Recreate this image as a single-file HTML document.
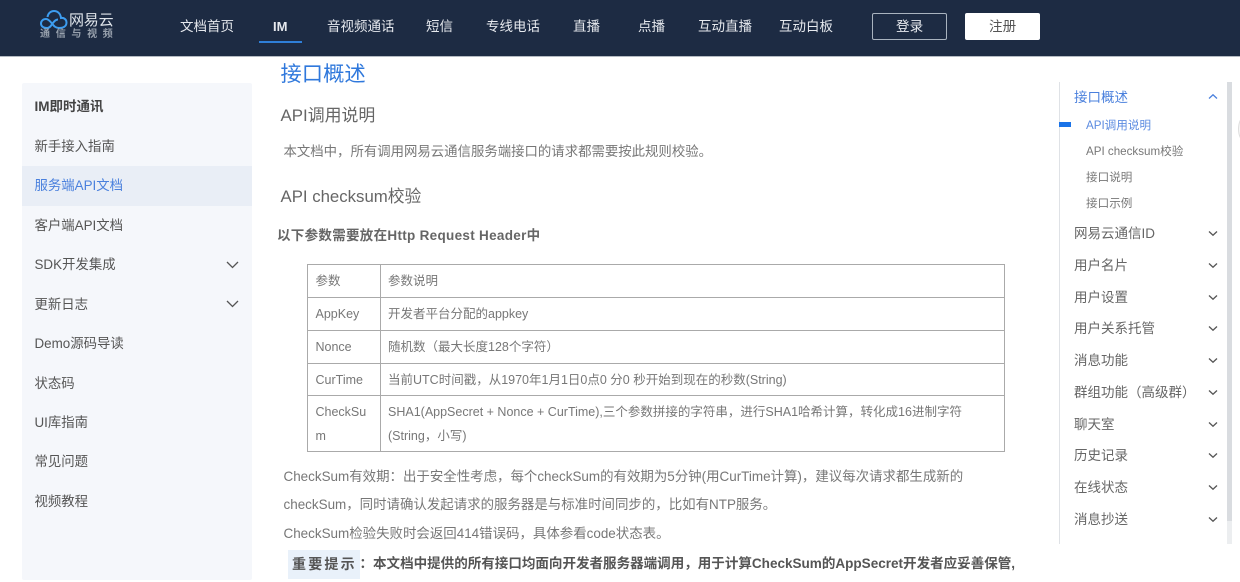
<!DOCTYPE html>
<html lang="zh-CN">
<head>
<meta charset="utf-8">
<title>接口概述</title>
<style>
html,body{margin:0;padding:0;width:1240px;height:582px;overflow:hidden;background:#fff}
body{position:relative;font-family:"Liberation Sans","Noto Sans CJK SC",sans-serif;color:#666}
#w{position:absolute;left:0;top:0;width:1240px;height:582px;filter:blur(.3px)}
.t{position:absolute;white-space:nowrap;line-height:20px;margin:0;font-weight:400}
.b{position:absolute}
.n{color:#e6e9ee;font-size:13.5px;top:17px}
.s{color:#555;font-size:13.4px;left:34.5px}
.r{color:#666;font-size:13.5px;left:1074px}
.u{color:#777;font-size:11.6px;left:1086px}
.c{color:#777;font-size:12.5px}
.p{color:#777;font-size:13.45px}
.h{background:#aaa}
svg{position:absolute;overflow:visible}
</style>
</head>
<body>
<div id="w">
<div class="b" style="left:0;top:0;width:1240px;height:56px;background:#1d2b43;border-bottom:1px solid #b4bac2"></div>

<svg style="left:40px;top:10px" width="28" height="20" viewBox="0 0 28 20" fill="none" stroke="#3d9df0" stroke-width="2">
<path d="M7 18C3 18 1 16 1 13.500C1 11 3 9 6 9C8 9 10 11 12 13.500C14 16 15.500 18 19 18C23 18 26.500 16.500 26.500 12.500C26.500 9.500 24 7.500 21 8C20.500 3.500 17.500 1 14 1C10.500 1 8 3.500 7.500 7"/>
<path d="M7 18C10 18 11 15.500 12.500 13.500C14 11.500 15.500 9.500 18 9.500"/>
</svg>
<p class="t" style="left:69px;top:11px;font-size:15px;color:#dfe4ea;letter-spacing:-.2px">网易云</p>
<p class="t" style="left:40px;top:25px;font-size:10px;color:#98a1ad;letter-spacing:5.700px;font-weight:700">通信与视频</p>

<p class="t n" style="left:180px">文档首页</p>
<p class="t n" style="left:273px;font-size:13px;font-weight:700">IM</p>
<div class="b" style="left:259px;top:41px;width:43px;height:2px;background:#2f7fd8"></div>
<p class="t n" style="left:327px">音视频通话</p>
<p class="t n" style="left:426px">短信</p>
<p class="t n" style="left:486px">专线电话</p>
<p class="t n" style="left:573px">直播</p>
<p class="t n" style="left:638px">点播</p>
<p class="t n" style="left:698px">互动直播</p>
<p class="t n" style="left:779px">互动白板</p>
<div class="b" style="left:872px;top:13px;width:73px;height:25px;border:1px solid #a9b3bf;border-radius:2px"></div>
<p class="t" style="left:896px;top:17px;font-size:13.6px;color:#e6e9ee">登录</p>
<div class="b" style="left:965px;top:13px;width:75px;height:27px;background:#fff;border-radius:2px"></div>
<p class="t" style="left:989px;top:17px;font-size:13.6px;color:#555">注册</p>

<div class="b" style="left:22px;top:83px;width:230px;height:497px;background:#f5f7fb;border-radius:2px"></div>
<div class="b" style="left:22px;top:166px;width:230px;height:40px;background:#e9eef6"></div>
<p class="t s" style="top:97px;font-weight:700;color:#444;font-size:13.500px">IM即时通讯</p>
<p class="t s" style="top:137px">新手接入指南</p>
<p class="t s" style="top:176px;color:#4a80dd">服务端API文档</p>
<p class="t s" style="top:216px">客户端API文档</p>
<p class="t s" style="top:255px">SDK开发集成</p>
<p class="t s" style="top:295px">更新日志</p>
<p class="t s" style="top:334px">Demo源码导读</p>
<p class="t s" style="top:374px">状态码</p>
<p class="t s" style="top:413px">UI库指南</p>
<p class="t s" style="top:452px">常见问题</p>
<p class="t s" style="top:492px">视频教程</p>
<svg style="left:226px;top:261px" width="13" height="8" fill="none" stroke="#555" stroke-width="1.300"><path d="M1 1L6.500 6.500L12 1"/></svg>
<svg style="left:226px;top:300px" width="13" height="8" fill="none" stroke="#555" stroke-width="1.300"><path d="M1 1L6.500 6.500L12 1"/></svg>

<p class="t" style="left:280.500px;top:63px;font-size:21.300px;line-height:22px;color:#2f78dc">接口概述</p>
<p class="t" style="left:280.500px;top:106px;font-size:16.900px;color:#666">API调用说明</p>
<p class="t p" style="left:283.500px;top:142px;font-size:13.400px">本文档中，所有调用网易云通信服务端接口的请求都需要按此规则校验。</p>
<p class="t" style="left:280.500px;top:187px;font-size:16.800px;color:#666">API checksum校验</p>
<p class="t" style="left:277px;top:226px;font-size:13.500px;font-weight:700;color:#666;letter-spacing:.3px">以下参数需要放在Http Request Header中</p>

<div class="b h" style="left:307px;top:264px;width:698px;height:1px"></div>
<div class="b h" style="left:307px;top:297px;width:698px;height:1px"></div>
<div class="b h" style="left:307px;top:330px;width:698px;height:1px"></div>
<div class="b h" style="left:307px;top:363px;width:698px;height:1px"></div>
<div class="b h" style="left:307px;top:395px;width:698px;height:1px"></div>
<div class="b h" style="left:307px;top:451px;width:698px;height:1px"></div>
<div class="b h" style="left:307px;top:264px;width:1px;height:188px"></div>
<div class="b h" style="left:380px;top:264px;width:1px;height:188px"></div>
<div class="b h" style="left:1004px;top:264px;width:1px;height:188px"></div>

<p class="t c" style="left:315.500px;top:271px">参数</p>
<p class="t c" style="left:388px;top:271px">参数说明</p>
<p class="t c" style="left:315.500px;top:304px">AppKey</p>
<p class="t c" style="left:388px;top:304px">开发者平台分配的appkey</p>
<p class="t c" style="left:315.500px;top:337px">Nonce</p>
<p class="t c" style="left:388px;top:337px">随机数（最大长度128个字符）</p>
<p class="t c" style="left:315.500px;top:370px">CurTime</p>
<p class="t c" style="left:388px;top:370px">当前UTC时间戳，从1970年1月1日0点0 分0 秒开始到现在的秒数(String)</p>
<p class="t c" style="left:315.500px;top:402px">CheckSu</p>
<p class="t c" style="left:315.500px;top:426px">m</p>
<p class="t c" style="left:388px;top:402px">SHA1(AppSecret + Nonce + CurTime),三个参数拼接的字符串，进行SHA1哈希计算，转化成16进制字符</p>
<p class="t c" style="left:388px;top:426px">(String，小写)</p>

<p class="t p" style="left:283.500px;top:467px">CheckSum有效期：出于安全性考虑，每个checkSum的有效期为5分钟(用CurTime计算)，建议每次请求都生成新的</p>
<p class="t p" style="left:283.500px;top:495px">checkSum，同时请确认发起请求的服务器是与标准时间同步的，比如有NTP服务。</p>
<p class="t p" style="left:283.500px;top:524px">CheckSum检验失败时会返回414错误码，具体参看code状态表。</p>
<div class="b" style="left:288px;top:550px;width:72px;height:29px;background:#e9f1fa"></div>
<p class="t" style="left:292px;top:554px;font-size:14px;font-weight:700;color:#555;letter-spacing:2.200px">重要提示</p>
<p class="t" style="left:359.500px;top:554px;font-size:13.540px;font-weight:700;color:#555">：本文档中提供的所有接口均面向开发者服务器端调用，用于计算CheckSum的AppSecret开发者应妥善保管,</p>

<div class="b" style="left:1059px;top:82px;width:1px;height:462px;background:#dfe2e6"></div>
<div class="b" style="left:1227px;top:82px;width:5px;height:462px;background:#d9dce0"></div>
<div class="b" style="left:1227px;top:521px;width:5px;height:23px;background:#eceef0"></div>
<div class="b" style="left:1059px;top:122px;width:12px;height:5px;background:#1a73e8"></div>
<div class="b" style="left:1238px;top:116px;width:12px;height:24px;border:1px solid #ddd;border-radius:50%;background:#f6f6f6"></div>

<p class="t r" style="top:88px;color:#4a80dd">接口概述</p>
<p class="t u" style="top:116px;color:#5b8be0">API调用说明</p>
<p class="t u" style="top:142px">API checksum校验</p>
<p class="t u" style="top:168px">接口说明</p>
<p class="t u" style="top:194px">接口示例</p>
<p class="t r" style="top:224px">网易云通信ID</p>
<p class="t r" style="top:256px">用户名片</p>
<p class="t r" style="top:288px">用户设置</p>
<p class="t r" style="top:319px">用户关系托管</p>
<p class="t r" style="top:351px">消息功能</p>
<p class="t r" style="top:383px">群组功能（高级群）</p>
<p class="t r" style="top:415px">聊天室</p>
<p class="t r" style="top:446px">历史记录</p>
<p class="t r" style="top:478px">在线状态</p>
<p class="t r" style="top:510px">消息抄送</p>

<svg style="left:1209px;top:94px" width="8" height="5" fill="none" stroke="#4a80dd" stroke-width="1.300"><path d="M0 4.500L4 .8L8 4.500"/></svg>
<svg style="left:1209px;top:231px" width="8" height="5" fill="none" stroke="#555" stroke-width="1.300"><path d="M0 .5L4 4.200L8 .5"/></svg>
<svg style="left:1209px;top:263px" width="8" height="5" fill="none" stroke="#555" stroke-width="1.300"><path d="M0 .5L4 4.200L8 .5"/></svg>
<svg style="left:1209px;top:295px" width="8" height="5" fill="none" stroke="#555" stroke-width="1.300"><path d="M0 .5L4 4.200L8 .5"/></svg>
<svg style="left:1209px;top:326px" width="8" height="5" fill="none" stroke="#555" stroke-width="1.300"><path d="M0 .5L4 4.200L8 .5"/></svg>
<svg style="left:1209px;top:358px" width="8" height="5" fill="none" stroke="#555" stroke-width="1.300"><path d="M0 .5L4 4.200L8 .5"/></svg>
<svg style="left:1209px;top:390px" width="8" height="5" fill="none" stroke="#555" stroke-width="1.300"><path d="M0 .5L4 4.200L8 .5"/></svg>
<svg style="left:1209px;top:422px" width="8" height="5" fill="none" stroke="#555" stroke-width="1.300"><path d="M0 .5L4 4.200L8 .5"/></svg>
<svg style="left:1209px;top:453px" width="8" height="5" fill="none" stroke="#555" stroke-width="1.300"><path d="M0 .5L4 4.200L8 .5"/></svg>
<svg style="left:1209px;top:485px" width="8" height="5" fill="none" stroke="#555" stroke-width="1.300"><path d="M0 .5L4 4.200L8 .5"/></svg>
<svg style="left:1209px;top:517px" width="8" height="5" fill="none" stroke="#555" stroke-width="1.300"><path d="M0 .5L4 4.200L8 .5"/></svg>
</div>
</body>
</html>
